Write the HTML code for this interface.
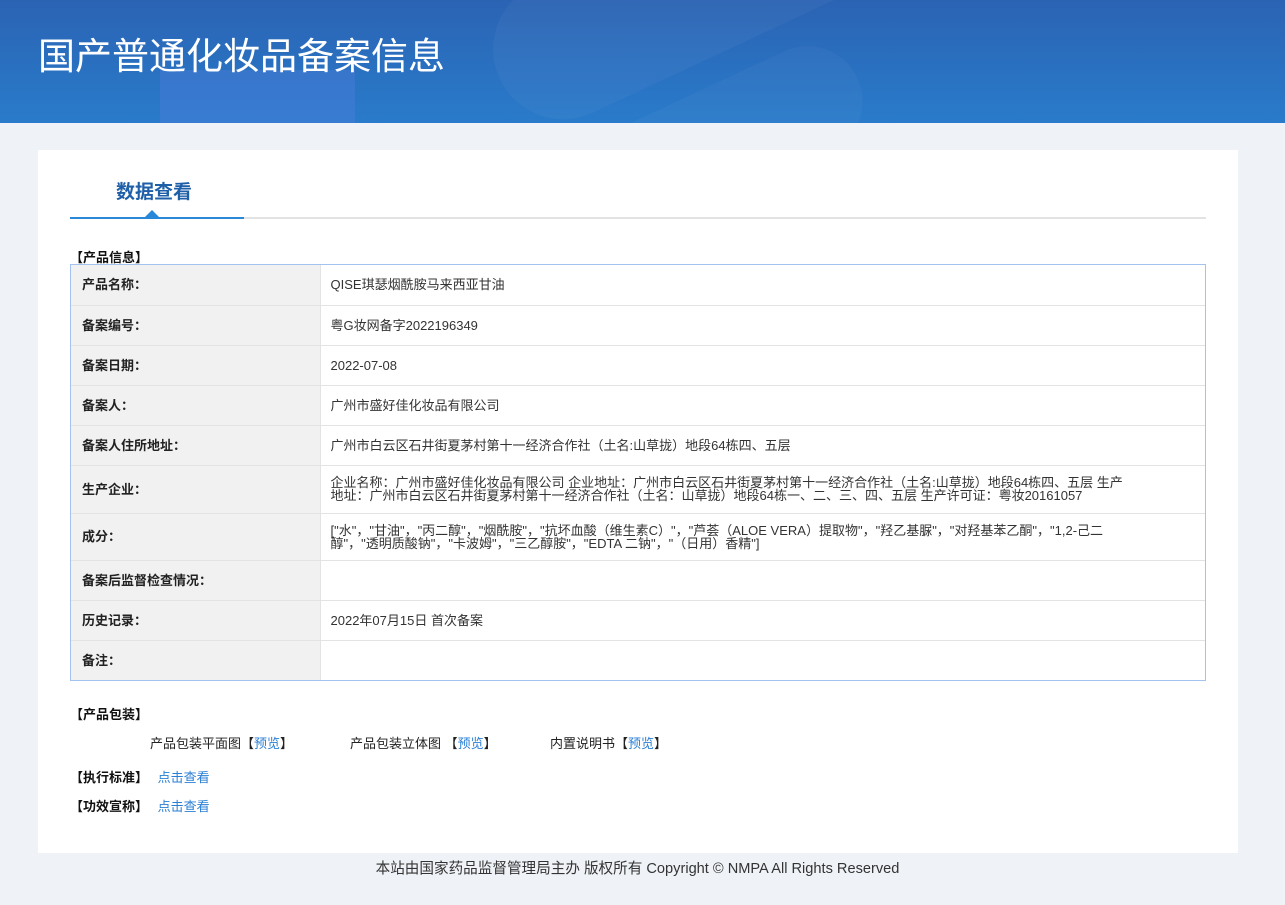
<!DOCTYPE html>
<html><head><meta charset="utf-8"><style>
*{margin:0;padding:0;box-sizing:border-box}
body{width:1285px;height:905px;background:#eff3f7;font-family:"Liberation Sans","Noto Sans CJK SC",sans-serif;font-size:13px;color:#333;position:relative;overflow:hidden}
.hd{position:absolute;left:0;top:0;width:1285px;height:123px;background:linear-gradient(180deg,#2b63b3 0%,#2a7bcb 100%);overflow:hidden}
.hd .c1{position:absolute;left:480px;top:-80px;width:420px;height:140px;border-radius:70px;background:rgba(255,255,255,0.035);transform:rotate(-25deg)}
.hd .c2{position:absolute;left:160px;top:70px;width:195px;height:80px;background:rgba(90,130,230,0.3)}
.hd .c3{position:absolute;left:600px;top:80px;width:270px;height:110px;border-radius:55px;background:rgba(255,255,255,0.03);transform:rotate(-25deg)}
.hd h1{position:absolute;left:38px;top:26px;color:#fff;font-size:37px;font-weight:normal;font-family:"Liberation Sans","Noto Sans CJK SC",sans-serif}
.card{position:absolute;left:38px;top:150px;width:1200px;height:703px;background:#fff}
.tab{position:absolute;left:78px;top:27px;font-size:19px;font-weight:bold;color:#1e5fa8}
.line{position:absolute;left:32px;top:67px;width:1136px;height:2px;background:#e3e3e3}
.line i{position:absolute;left:0;top:0;width:174px;height:2px;background:#2a88d8}
.tri{position:absolute;left:107px;top:60px;width:0;height:0;border-left:7px solid transparent;border-right:7px solid transparent;border-bottom:7px solid #2a88d8}
.sec{position:absolute;font-weight:bold;color:#111;font-size:13px}
.tb{position:absolute;left:32px;top:114px;width:1136px;border:1px solid #a3c2ee}
table{width:100%;border-collapse:collapse}
td{border-top:1px solid #e3e3e3;padding:0 11px;vertical-align:middle;line-height:13px}
tr:first-child td{border-top:none}
td.l{width:249px;background:#f1f1f1;font-weight:bold;color:#222;border-right:1px solid #e3e3e3}
td.v{color:#333;padding-right:0;padding-left:10px;white-space:nowrap}
a{color:#2a7fd4;text-decoration:none}
.pk{position:absolute;top:583px;color:#222}
.ft{position:absolute;left:0;top:857px;width:1275px;text-align:center;font-size:14.6px;color:#333}
</style></head><body>
<div class="hd"><div class="c1"></div><div class="c3"></div><div class="c2"></div><h1>国产普通化妆品备案信息</h1></div>
<div class="card">
<div class="tab">数据查看</div>
<div class="line"><i></i></div><div class="tri"></div>
<div class="sec" style="left:32px;top:97px">【产品信息】</div>
<div class="tb"><table>
<tr style="height:40px"><td class="l">产品名称：</td><td class="v">QISE琪瑟烟酰胺马来西亚甘油</td></tr>
<tr style="height:40px"><td class="l">备案编号：</td><td class="v">粤G妆网备字2022196349</td></tr>
<tr style="height:40px"><td class="l">备案日期：</td><td class="v">2022-07-08</td></tr>
<tr style="height:40px"><td class="l">备案人：</td><td class="v">广州市盛好佳化妆品有限公司</td></tr>
<tr style="height:40px"><td class="l">备案人住所地址：</td><td class="v">广州市白云区石井街夏茅村第十一经济合作社（土名:山草拢）地段64栋四、五层</td></tr>
<tr style="height:48px"><td class="l">生产企业：</td><td class="v">企业名称：广州市盛好佳化妆品有限公司 企业地址：广州市白云区石井街夏茅村第十一经济合作社（土名:山草拢）地段64栋四、五层 生产<br>地址：广州市白云区石井街夏茅村第十一经济合作社（土名：山草拢）地段64栋一、二、三、四、五层 生产许可证：粤妆20161057</td></tr>
<tr style="height:47px"><td class="l">成分：</td><td class="v">["水"，"甘油"，"丙二醇"，"烟酰胺"，"抗坏血酸（维生素C）"，"芦荟（ALOE VERA）提取物"，"羟乙基脲"，"对羟基苯乙酮"，"1,2-己二<br>醇"，"透明质酸钠"，"卡波姆"，"三乙醇胺"，"EDTA 二钠"，"（日用）香精"]</td></tr>
<tr style="height:40px"><td class="l">备案后监督检查情况：</td><td class="v"></td></tr>
<tr style="height:40px"><td class="l">历史记录：</td><td class="v">2022年07月15日 首次备案</td></tr>
<tr style="height:40px"><td class="l">备注：</td><td class="v"></td></tr>
</table></div>
<div class="sec" style="left:32px;top:554px">【产品包装】</div>
<div class="pk" style="left:112px">产品包装平面图【<a>预览</a>】</div>
<div class="pk" style="left:312px">产品包装立体图 【<a>预览</a>】</div>
<div class="pk" style="left:512px">内置说明书【<a>预览</a>】</div>
<div class="sec" style="left:32px;top:617px">【执行标准】 <a style="font-weight:normal;margin-left:6px">点击查看</a></div>
<div class="sec" style="left:32px;top:646px">【功效宣称】 <a style="font-weight:normal;margin-left:6px">点击查看</a></div>
</div>
<div class="ft">本站由国家药品监督管理局主办 版权所有 Copyright © NMPA All Rights Reserved</div>
</body></html>
